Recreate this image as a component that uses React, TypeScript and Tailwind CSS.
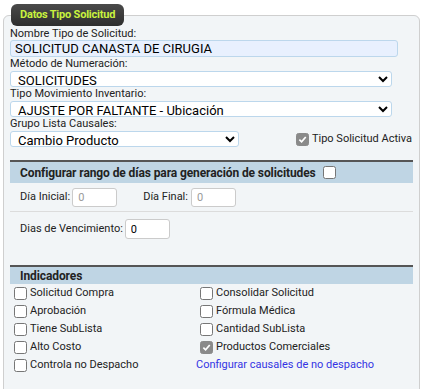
import React from 'react'

const label = "block text-[11px] leading-[13px] text-[#222] font-['Roboto',sans-serif]"
const field =
  "block h-[16px] border border-[#bcd7ec] rounded-[3px] bg-white px-[3px] text-[13px] leading-[14px] text-black font-['Roboto',sans-serif]"
const small =
  "w-[45px] h-[19px] border border-[#cbcbcb] rounded-[3px] bg-white px-[5px] text-[11px] font-['Roboto',sans-serif] placeholder:text-[#9a9a9a]"

function Box({ checked = false }: { checked?: boolean }) {
  return (
    <span
      className={
        'inline-flex items-center justify-center shrink-0 w-[13px] h-[13px] rounded-[2.5px] border ' +
        (checked ? 'bg-[#8a8a8a] border-[#8a8a8a]' : 'bg-white border-[#767676]')
      }
    >
      {checked && (
        <svg width="9" height="9" viewBox="0 0 10 10">
          <path d="M1.5 5.2 L4 7.6 L8.6 2.2" fill="none" stroke="white" strokeWidth="1.9" />
        </svg>
      )}
    </span>
  )
}

function Check({ text, checked = false }: { text: string; checked?: boolean }) {
  return (
    <label className="flex items-center h-[18px] text-[11px] text-[#222] font-['Roboto',sans-serif]">
      <span className="ml-[4px] mr-[3px] flex">
        <Box checked={checked} />
      </span>
      {text}
    </label>
  )
}

export default function App() {
  return (
    <div className="w-[421px] h-[389px] overflow-hidden bg-white pt-[4px] pl-[3px] pr-[1px]">
      <fieldset className="border border-[#cfcfcf] rounded-[6px] bg-[#f2f5f7] px-[6px] pb-[20px] min-h-[420px]">
        <legend className="ml-[1px] rounded-[6px] bg-gradient-to-b from-[#4a4a4a] to-[#2e2e2e] px-[9px] h-[22px] flex items-center text-[11px] font-bold tracking-[-0.2px] text-[#c9f23e] font-['Roboto',sans-serif]">
          Datos Tipo Solicitud
        </legend>

        <div className="pt-[1px]">
          <span className={label}>Nombre Tipo de Solicitud:</span>
          <input
            readOnly
            value="SOLICITUD CANASTA DE CIRUGIA"
            className={field + ' w-[388px] !bg-[#e8f0fe] !h-[17px] px-[4px]'}
          />
        </div>

        <div>
          <span className={label}>Método de Numeración:</span>
          <select className={field + ' w-[382px] mt-[1px]'} defaultValue="s">
            <option value="s">SOLICITUDES</option>
          </select>
        </div>

        <div>
          <span className={label}>Tipo Movimiento Inventario:</span>
          <select className={field + ' w-[382px] mt-[1px]'} defaultValue="a">
            <option value="a">AJUSTE POR FALTANTE - Ubicación</option>
          </select>
        </div>

        <div>
          <span className={label}>Grupo Lista Causales:</span>
          <div className="flex items-center justify-between h-[16px] mt-[1px]">
            <select className={field + ' w-[229px]'} defaultValue="c">
              <option value="c">Cambio Producto</option>
            </select>
            <label className="flex items-center pr-[1px] text-[11px] text-[#222] font-['Roboto',sans-serif]">
              <span className="mr-[3px] flex">
                <Box checked />
              </span>
              Tipo Solicitud Activa
            </label>
          </div>
        </div>

        <div className="mt-[13px] border-t-[2px] border-[#555] bg-[#bfd5e4] h-[23px] pl-[10px] flex items-center text-[12px] font-bold tracking-[-0.1px] text-[#222] font-['Roboto',sans-serif]">
          Configurar rango de días para generación de solicitudes
          <span className="ml-[7px] flex">
            <Box />
          </span>
        </div>

        <div className="flex items-center h-[28px] pl-[10px] text-[11px] text-[#222] font-['Roboto',sans-serif]">
          <span>Día Inicial:</span>
          <input placeholder="0" className={small + ' ml-[2px]'} />
          <span className="ml-[26px]">Día Final:</span>
          <input placeholder="0" className={small + ' ml-[3px]'} />
        </div>

        <div className="border-t border-[#dcdcdc]" />

        <div className="flex items-center h-[34px] pl-[10px] text-[11px] text-[#222] font-['Roboto',sans-serif]">
          <span>Dias de Vencimiento:</span>
          <input readOnly value="0" className={small + ' ml-[2px] h-[20px] text-black'} />
        </div>

        <div className="mt-[19px] border-t-[2px] border-[#555] bg-[#bfd5e4] h-[19px] pl-[10px] flex items-center text-[12px] font-bold tracking-[-0.1px] text-[#222] font-['Roboto',sans-serif]">
          Indicadores
        </div>

        <div className="grid grid-cols-[186px_1fr]">
          <Check text="Solicitud Compra" />
          <Check text="Consolidar Solicitud" />
          <Check text="Aprobación" />
          <Check text="Fórmula Médica" />
          <Check text="Tiene SubLista" />
          <Check text="Cantidad SubLista" />
          <Check text="Alto Costo" />
          <Check text="Productos Comerciales" checked />
          <Check text="Controla no Despacho" />
          <a className="flex items-center h-[18px] text-[11px] text-[#3434e4] font-['Roboto',sans-serif] cursor-pointer">
            Configurar causales de no despacho
          </a>
        </div>
      </fieldset>
    </div>
  )
}
